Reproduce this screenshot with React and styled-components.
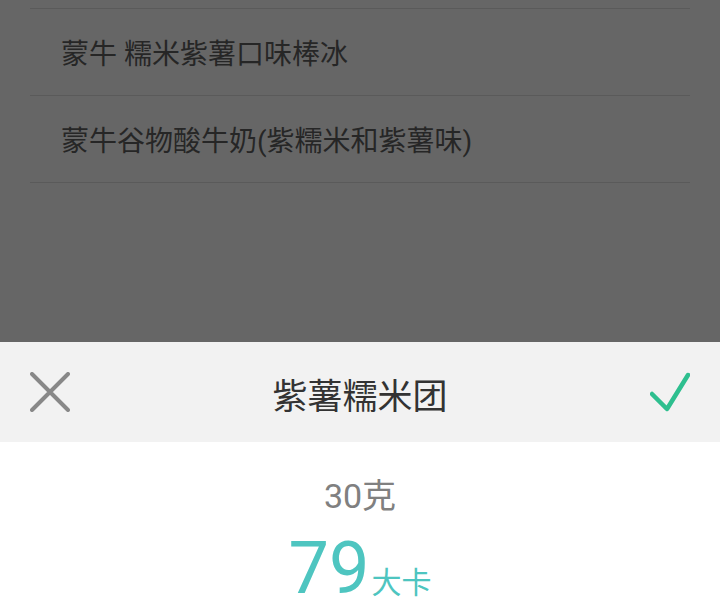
import React from "react";
import styled, { createGlobalStyle } from "styled-components";

const Global = createGlobalStyle`
  html, body { margin: 0; padding: 0; }
  body { font-family: Roboto, "Noto Sans CJK SC", sans-serif; }
  * { box-sizing: border-box; }
`;

const Page = styled.div`
  width: 720px;
  height: 600px;
  display: flex;
  flex-direction: column;
  overflow: hidden;
`;

const Backdrop = styled.div`
  height: 342px;
  flex-shrink: 0;
  background: #666666;
  padding: 8px 30px 0;
`;

const List = styled.div`
  border-top: 1px solid #5a5a5a;
`;

const Row = styled.div`
  height: 87px;
  display: flex;
  align-items: center;
  padding-left: 31px;
  border-bottom: 1px solid #5a5a5a;
  font-size: 28px;
  color: #262626;
  white-space: nowrap;
`;

const Sheet = styled.div`
  flex: 1;
  min-height: 0;
  background: #ffffff;
  display: flex;
  flex-direction: column;
`;

const Header = styled.div`
  height: 100px;
  flex-shrink: 0;
  background: #f2f2f2;
  display: grid;
  grid-template-columns: 100px 1fr 100px;
  align-items: center;
`;

const IconBtn = styled.div`
  display: flex;
  justify-content: ${(p) => (p.$end ? "flex-end" : "flex-start")};
  padding: ${(p) => (p.$end ? "0 30px 0 0" : "0 0 0 30px")};
  align-items: center;
  height: 100%;
`;

const Title = styled.div`
  text-align: center;
  font-size: 35px;
  color: #333333;
  padding-top: 2px;
`;

const Body = styled.div`
  display: flex;
  flex-direction: column;
  align-items: center;
  padding-top: 36px;
`;

const Weight = styled.div`
  font-size: 34px;
  line-height: 36px;
  color: #808080;
`;

const Calories = styled.div`
  display: flex;
  align-items: baseline;
  color: #4ec5c0;
  margin-top: 27px;
`;

const Big = styled.span`
  font-size: 72px;
  line-height: 56px;
`;

const Unit = styled.span`
  font-size: 30px;
  line-height: 1;
  margin-left: 2px;
`;

const rows = ["蒙牛 糯米紫薯口味棒冰", "蒙牛谷物酸牛奶(紫糯米和紫薯味)"];

export default function App() {
  return (
    <Page>
      <Global />
      <Backdrop>
        <List>
          {rows.map((r) => (
            <Row key={r}>{r}</Row>
          ))}
        </List>
      </Backdrop>
      <Sheet>
        <Header>
          <IconBtn>
            <svg width="40" height="40" viewBox="0 0 40 40">
              <path d="M2 2 L38 38 M38 2 L2 38" stroke="#888888" strokeWidth="4" strokeLinecap="round" fill="none" />
            </svg>
          </IconBtn>
          <Title>紫薯糯米团</Title>
          <IconBtn $end>
            <svg width="40" height="40" viewBox="0 0 40 40">
              <path d="M2 22 L17 37 L38 3" stroke="#2ebf8f" strokeWidth="4.5" strokeLinecap="round" strokeLinejoin="round" fill="none" />
            </svg>
          </IconBtn>
        </Header>
        <Body>
          <Weight>30克</Weight>
          <Calories>
            <Big>79</Big>
            <Unit>大卡</Unit>
          </Calories>
        </Body>
      </Sheet>
    </Page>
  );
}
